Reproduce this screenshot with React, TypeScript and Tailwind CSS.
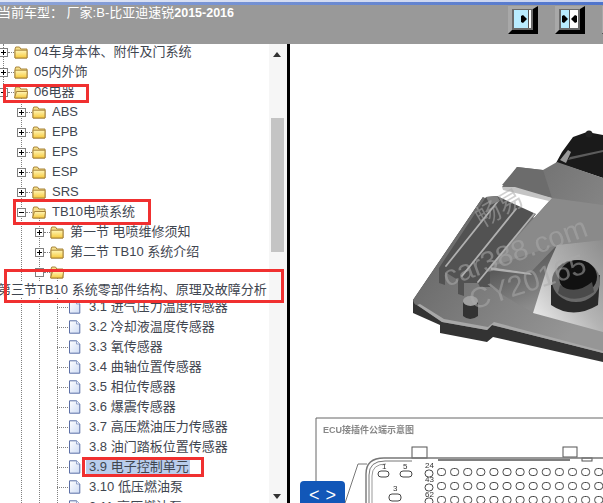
import React from "react";

type Row = {
  level: number;
  label: string;
  box?: "plus" | "minus" | "empty";
  open?: boolean;
};

const levelPad = ["pl-0", "pl-[17px]", "pl-[35px]"];

const topRows: Row[] = [
  { level: 0, label: "04车身本体、附件及门系统", box: "plus" },
  { level: 0, label: "05内外饰", box: "plus" },
  { level: 0, label: "06电器", box: "minus", open: true },
  { level: 1, label: "ABS", box: "plus" },
  { level: 1, label: "EPB", box: "plus" },
  { level: 1, label: "EPS", box: "plus" },
  { level: 1, label: "ESP", box: "plus" },
  { level: 1, label: "SRS", box: "plus" },
  { level: 1, label: "TB10电喷系统", box: "minus", open: true },
  { level: 2, label: "第一节 电喷维修须知", box: "plus" },
  { level: 2, label: "第二节 TB10 系统介绍", box: "plus" },
  { level: 2, label: "", box: "empty", open: true },
];

const docs = [
  "3.1 进气压力温度传感器",
  "3.2 冷却液温度传感器",
  "3.3 氧传感器",
  "3.4 曲轴位置传感器",
  "3.5 相位传感器",
  "3.6 爆震传感器",
  "3.7 高压燃油压力传感器",
  "3.8 油门踏板位置传感器",
  "3.9 电子控制单元",
  "3.10 低压燃油泵",
  "3.11 高压燃油泵",
];

const pinCols = Array.from({ length: 13 }, (_, i) => 441 + i * 13.1);

function Folder({ open }: { open?: boolean }) {
  return (
    <svg width="14" height="13" viewBox="0 0 14 13" className="shrink-0">
      <defs>
        <linearGradient id="fold" x1="0" y1="0" x2="0" y2="1">
          <stop offset="0" stopColor="#fff6b8" />
          <stop offset="1" stopColor="#f7c93c" />
        </linearGradient>
      </defs>
      <path d="M1 3 L1.8 1 H5.5 L6.8 3 H13 V12 H1 Z" fill="#f7e08a" stroke="#a8843a" strokeWidth="1" />
      {open ? (
        <path d="M0.5 12 L2.5 5.5 H13.6 L12.6 12 Z" fill="url(#fold)" stroke="#a8843a" strokeWidth="1" />
      ) : (
        <path d="M1 4.2 H13 V12 H1 Z" fill="url(#fold)" stroke="#a8843a" strokeWidth="1" />
      )}
    </svg>
  );
}

function Doc() {
  return (
    <svg width="13" height="14" viewBox="0 0 13 14" className="shrink-0">
      <defs>
        <linearGradient id="doc" x1="0" y1="0" x2="1" y2="1">
          <stop offset="0" stopColor="#ffffff" />
          <stop offset="1" stopColor="#cfdcf4" />
        </linearGradient>
      </defs>
      <path d="M1.5 0.8 H8.5 L11.8 4 V13.2 H1.5 Z" fill="url(#doc)" stroke="#5b6fa6" strokeWidth="1" />
      <path d="M8.5 0.8 V4 H11.8" fill="#eef3fc" stroke="#8595c0" strokeWidth="0.8" />
    </svg>
  );
}

function Expander({ kind }: { kind: "plus" | "minus" | "empty" }) {
  return (
    <span className="relative w-[9px] h-[9px] shrink-0 border border-[#808080] bg-white flex items-center justify-center">
      {kind !== "empty" && <span className="w-[5px] h-px bg-black" />}
      {kind === "plus" && <span className="absolute w-px h-[5px] bg-black" />}
    </span>
  );
}

function TreeRow({ row }: { row: Row }) {
  return (
    <div className={`relative flex items-center h-5 ${levelPad[row.level]} ${row.level === 0 ? "-ml-px" : ""}`}>
      <Expander kind={row.box!} />
      <span className="w-[6px] shrink-0 border-t border-dotted border-[#808080]" />
      <Folder open={row.open} />
      <span className="ml-[6px] whitespace-nowrap">{row.label}</span>
    </div>
  );
}

function DocRow({ label }: { label: string }) {
  const selected = label.startsWith("3.9");
  return (
    <div className="relative flex items-center h-5 pl-[57px]">
      <span className="w-[11px] shrink-0 border-t border-dotted border-[#808080]" />
      <Doc />
      <span className={`ml-[5px] pl-[3px] pr-[1px] whitespace-nowrap ${selected ? "bg-[#b9cdec]" : ""}`}>{label}</span>
    </div>
  );
}

function ToolButton({ kind }: { kind: "one" | "two" }) {
  return (
    <div className="shrink-0 w-[30px] h-[28px] border-t-[3px] border-l-[4px] border-t-[#a8a8a8] border-l-[#a8a8a8] border-r-[5px] border-b-[4px] border-r-black border-b-black bg-[#6a6a6a] px-[2px] pt-[1px]">
      <svg width="17" height="18" viewBox="0 0 17 18" className="block">
        <rect width="17" height="18" fill={kind === "one" ? "#b9ecff" : "#ffffff"} />
        {kind === "one" ? (
          <>
            <rect x="14" width="1" height="18" fill="#555" />
            <rect x="15" width="2" height="18" fill="#fff" />
            <path d="M7 6 L9 5 L13 9 L9 13 L7 12 Z" fill="#000" />
          </>
        ) : (
          <>
            <rect width="8" height="18" fill="#b9ecff" />
            <rect x="8" width="1" height="18" fill="#555" />
            <path d="M1 6 L3 5 L7 9 L3 13 L1 12 Z" fill="#000" />
            <path d="M16 6 L14 5 L10 9 L14 13 L16 12 Z" fill="#000" />
          </>
        )}
      </svg>
    </div>
  );
}

function Picture() {
  return (
    <svg viewBox="290 44 313 459" className="block w-full h-full">
      <defs>
        <linearGradient id="body" x1="0" y1="0" x2="1" y2="1">
          <stop offset="0" stopColor="#6a6a6a" />
          <stop offset="1" stopColor="#939393" />
        </linearGradient>
        <linearGradient id="plate" x1="0" y1="0" x2="1" y2="0.6">
          <stop offset="0" stopColor="#5e5e5e" />
          <stop offset="1" stopColor="#969696" />
        </linearGradient>
        <linearGradient id="gloss" x1="0" y1="1" x2="1" y2="0">
          <stop offset="0" stopColor="#f4f4f4" />
          <stop offset="0.5" stopColor="#b4b4b4" />
          <stop offset="1" stopColor="#8e8e8e" />
        </linearGradient>
        <linearGradient id="front" x1="0" y1="0" x2="0.4" y2="1">
          <stop offset="0" stopColor="#3e3e3e" />
          <stop offset="1" stopColor="#8c8c8c" />
        </linearGradient>
      </defs>
      <g className="blur-[0.7px]">
        {/* plate */}
        <path d="M413 300 L413 313 L440 325 L440 333 L487 342 L493 337 L603 362 L603 340 L500 240 L483 197 Z" fill="#333" />
        <path d="M413 300 Q414 305 417 305 L442 322 L487 330 L492 325 L603 353 L603 230 L520 215 L483 197 Z" fill="url(#plate)" />
        <path d="M417 305 L442 322 L487 330 L492 325 L603 353 L603 351 L494 322 L488 327 L444 319 L420 304 Z" fill="#a8a8a8" />
        {/* connector black */}
        <path d="M556 163 L562 152 L573 137 L587 132 L603 135 L603 178 L570 167 Z" fill="#1a1a1a" />
        <circle cx="589" cy="134" r="3.5" fill="#222" />
        <path d="M570 157 L603 150 L603 152 L568 160 Z" fill="#5c5c5c" />
        <path d="M560 160 L568 150 L571 152 L566 163 Z" fill="#9a9a9a" />
        {/* top of housing */}
        <path d="M502 187 L517 167 L543 170 L557 162 L603 178 L603 330 L533 313 L490 287 L490 267 L552 198 Z" fill="url(#body)" />
        <path d="M502 185 L517 167 L543 170 L552 198 Z" fill="#6c6c6c" />
        <path d="M502 187 L515 187 L552 198 L549 201 L503 190 Z" fill="#c4c4c4" />
        <path d="M552 198 L603 205 L603 240 L557 245 L490 267 Z" fill="#8a8a8a" />
        {/* front face */}
        <path d="M490 267 L530 273 L557 245 L533 313 L490 287 Z" fill="url(#front)" />
        <path d="M490 267 L530 273 L532 275 L491 270 Z" fill="#b0b0b0" />
        {/* glossy panel */}
        <path d="M533 313 L548 265 L557 245 L603 240 L603 332 Z" fill="url(#gloss)" />
        {/* round socket */}
        <path d="M551 285 L551 305 Q573 320 598 305 L600 275 Z" fill="#2a2a2a" />
        <ellipse cx="576" cy="281" rx="24" ry="21" fill="#6a6a6a" />
        <ellipse cx="578" cy="277" rx="19" ry="17" fill="#111" />
        <path d="M560 285 Q575 296 592 282 L594 292 Q575 305 558 293 Z" fill="#4a4a4a" />
        {/* ribs */}
        <path d="M486 197 L497 196 L536 214 L490 267 L490 287 L480 287 L478 283 L464 283 L464 296 L458 294 L458 280 L445 272 L445 285 L439 283 L439 268 Z" fill="#525252" />
        <path d="M498 201 L446 266 M516 209 L462 276 M534 214 L478 282" fill="none" stroke="#b0b0b0" strokeWidth="1.8" strokeLinecap="round" />
        <path d="M486 197 L497 196 L500 201 L490 205 Z" fill="#808080" />
        <path d="M463 302 L463 316 Q470 322 478 316 L478 302 Z" fill="#333" />
        <ellipse cx="470.5" cy="301" rx="7.5" ry="5" fill="#a0a0a0" />
        {/* watermark */}
        <g fill="#aaaaaa" fillOpacity="0.55" fontFamily="'Liberation Sans','Noto Sans CJK SC',sans-serif">
          <text x="482" y="228" fontSize="25" transform="rotate(-30 482 228)">畅易</text>
          <text x="447" y="287" fontSize="29" transform="rotate(-20 447 287)">car388.com</text>
          <text x="473" y="310" fontSize="29" transform="rotate(-18 473 310)">CY20165</text>
        </g>
      </g>
      {/* pinout drawing */}
      <g className="blur-[0.4px]" fill="none" stroke="#777" strokeWidth="1">
        <path d="M316 503 V418 H603" stroke="#666" />
        <text x="323" y="433" fontSize="9" fill="#888" stroke="none" fontWeight="700" fontFamily="'Liberation Sans','Noto Sans CJK SC',sans-serif">ECU接插件公端示意图</text>
        <rect x="412" y="447" width="15" height="11" stroke="#555" />
        <rect x="563" y="447" width="14" height="10" stroke="#555" />
        <rect x="582" y="458" width="10" height="3" stroke="#555" />
        <path d="M366 503 V474 Q366 458 384 458 H603" strokeWidth="1.4" />
        <path d="M369 503 V475 Q369 461 385 461 H412" />
        <path d="M372 503 V476 Q372 464 386 464" stroke="#999" />
        <path d="M438 460 H570" stroke="#555" strokeWidth="1.4" />
        <path d="M345 503 L358 464 H367" />
        <g stroke="#444">
          <rect x="378" y="471" width="11" height="6" rx="3" />
          <rect x="400" y="471" width="12" height="6" rx="3" />
          <rect x="389" y="494" width="12" height="7" rx="3" />
          <rect x="425" y="470" width="8" height="7" rx="3.5" />
          <rect x="425" y="484" width="8" height="7" rx="3.5" />
          <rect x="425" y="498" width="8" height="7" rx="3.5" />
          {[472, 486, 500].map((y) =>
            pinCols.map((x) => <rect key={`${x}-${y}`} x={x - 3.5} y={y - 3.5} width="8" height="7" rx="3" />)
          )}
        </g>
        <g fontSize="8" fill="#333" stroke="none" fontFamily="'Liberation Sans',sans-serif">
          <text x="382" y="469">1</text>
          <text x="403" y="469">5</text>
          <text x="393" y="491">3</text>
          <text x="425" y="468">24</text>
          <text x="425" y="482">43</text>
          <text x="425" y="497">62</text>
        </g>
      </g>
    </svg>
  );
}

export default function App() {
  return (
    <div className="relative flex flex-col w-[603px] h-[503px] overflow-hidden bg-white font-['Liberation_Sans','Noto_Sans_CJK_SC',sans-serif] text-[13px] text-[#3f4650]">
      <div className="h-[2px] shrink-0 bg-gradient-to-r from-[#dfe5f5] to-[#c6d2f0]" />
      <div className="h-[3px] shrink-0 bg-gradient-to-r from-[#8fa5d8] to-[#4f74cc]" />
      <div className="h-[39px] shrink-0 bg-[#999999] flex items-start overflow-hidden">
        <div className="flex-1 -ml-[2px] -mt-px text-[13px] leading-[17px] text-white whitespace-nowrap">
          当前车型： 厂家:B-比亚迪速锐<span className="font-bold text-[12.5px]">2015-2016</span>
        </div>
        <div className="flex gap-[17px] mt-px -mr-[29px] shrink-0">
          <ToolButton kind="one" />
          <ToolButton kind="two" />
          <ToolButton kind="one" />
        </div>
      </div>

      <div className="relative flex flex-1 min-h-0">
        <div className="relative w-[269px] shrink-0 overflow-hidden">
          {/* tree guide lines */}
          <div className="absolute left-[3px] top-0 h-[48px] border-l border-dotted border-[#808080]" />
          <div className="absolute left-[21px] top-[53px] bottom-0 border-l border-dotted border-[#808080]" />
          <div className="absolute left-[39px] top-[173px] bottom-0 border-l border-dotted border-[#808080]" />
          <div className="absolute left-[57px] top-[233px] bottom-0 border-l border-dotted border-[#808080]" />
          <div className="-mt-[2px]">
            {topRows.map((row) => (
              <TreeRow key={row.label + row.level} row={row} />
            ))}
            <div className="relative h-[15px] leading-[16px] -ml-[2px] bg-white whitespace-nowrap">
              第三节TB10 系统零部件结构、原理及故障分析
            </div>
            {docs.map((d) => (
              <DocRow key={d} label={d} />
            ))}
          </div>
        </div>

        <div className="relative w-[18px] shrink-0 bg-[#f6f6f6]">
          <span className="absolute top-[8px] left-[4px] w-0 h-0 border-x-[4px] border-x-transparent border-b-[5px] border-b-[#333]" />
          <span className="absolute bottom-[4px] left-[4px] w-0 h-0 border-x-[4px] border-x-transparent border-t-[5px] border-t-[#333]" />
          <div className="absolute left-[2px] top-[74px] h-[134px] w-[13px] bg-[#c4c4c4]" />
        </div>
        <div className="w-[3px] shrink-0 bg-black" />

        <div className="relative flex-1 min-w-0 overflow-hidden">
          <Picture />
          <div className="absolute left-[10px] bottom-0 w-[45px] h-[22px] rounded-t-[4px] bg-[#1257b8] text-white text-[18px] leading-[28px] flex justify-center gap-[6px]">
            <span>&lt;</span>
            <span>&gt;</span>
          </div>
        </div>

        {/* red annotation boxes */}
        <div className="absolute left-[3px] top-[40px] w-[86px] h-[19px] border-[3px] border-[#f03030]" />
        <div className="absolute left-[13px] top-[155px] w-[138px] h-[26px] border-[3px] border-[#f03030]" />
        <div className="absolute left-[4px] top-[225px] w-[280px] h-[34px] border-[3px] border-[#f03030]" />
        <div className="absolute left-[82px] top-[413px] w-[122px] h-[20px] border-[3px] border-[#f03030]" />
      </div>
    </div>
  );
}
